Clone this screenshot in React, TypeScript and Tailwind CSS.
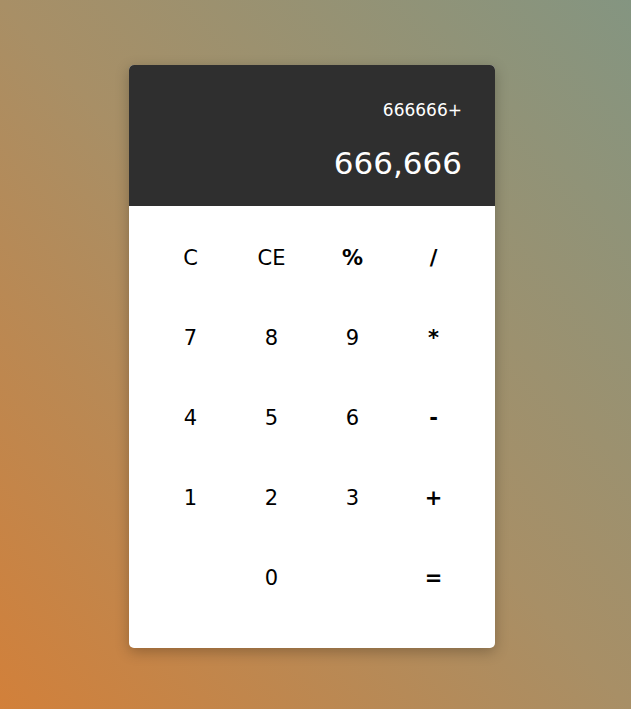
import React from "react";

const keys: { label: string; bold?: boolean }[] = [
  { label: "C" },
  { label: "CE" },
  { label: "%", bold: true },
  { label: "/", bold: true },
  { label: "7" },
  { label: "8" },
  { label: "9" },
  { label: "*", bold: true },
  { label: "4" },
  { label: "5" },
  { label: "6" },
  { label: "-", bold: true },
  { label: "1" },
  { label: "2" },
  { label: "3" },
  { label: "+", bold: true },
  { label: "" },
  { label: "0" },
  { label: "" },
  { label: "=", bold: true },
];

export default function App() {
  return (
    <div
      className="min-h-[709px] w-full bg-[linear-gradient(to_top_right,#d2803a,#a88f66_50%,#849581)] flex justify-center pr-[7px] pt-[65px]"
      style={{ fontFamily: '"DejaVu Sans", "Noto Sans", sans-serif' }}
    >
      <div className="w-[366px] h-[583px] rounded-[5px] overflow-hidden bg-white shadow-[0_4px_14px_rgba(0,0,0,0.25)] flex flex-col">
        <div className="h-[141px] bg-[#2f2f2f] flex flex-col items-end pr-[33px] text-white">
          <div className="mt-[32px] text-[17px] leading-[26px]">666666+</div>
          <div className="mt-[19px] text-[31px] leading-[42px]">666,666</div>
        </div>
        <div className="grid grid-cols-4 px-[21px] pt-[13px] text-black">
          {keys.map((k, i) => (
            <div
              key={i}
              className={`h-[80px] flex items-center justify-center text-[21px] ${
                k.bold ? "font-bold" : "font-normal"
              }`}
            >
              {k.label}
            </div>
          ))}
        </div>
      </div>
    </div>
  );
}
